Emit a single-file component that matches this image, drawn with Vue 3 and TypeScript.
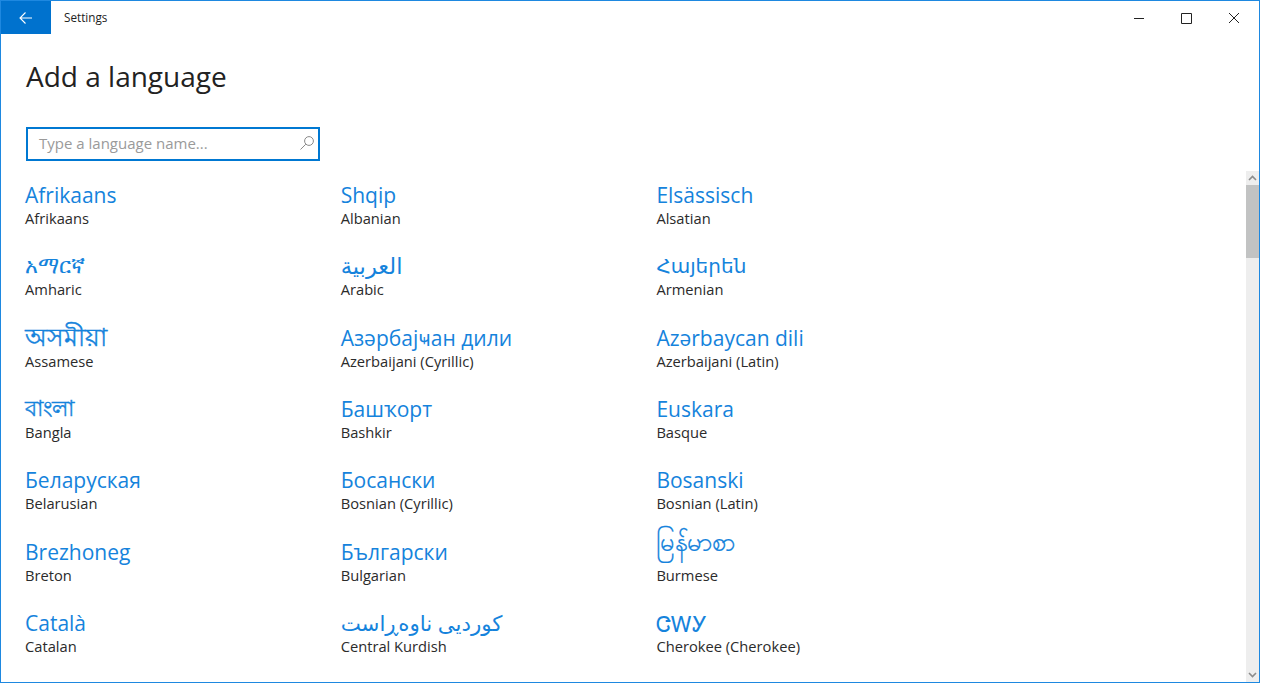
<script setup lang="ts">
interface Lang { name: string; sub: string; cls?: string }
const langs: Lang[] = [
  { name: 'Afrikaans', sub: 'Afrikaans' },
  { name: 'Shqip', sub: 'Albanian' },
  { name: 'Elsässisch', sub: 'Alsatian' },
  { name: 'አማርኛ', sub: 'Amharic', cls: 'ethiopic' },
  { name: 'العربية', sub: 'Arabic', cls: 'arabic' },
  { name: 'Հայերեն', sub: 'Armenian', cls: 'armenian' },
  { name: 'অসমীয়া', sub: 'Assamese', cls: 'assamese' },
  { name: 'Азәрбајҹан дили', sub: 'Azerbaijani (Cyrillic)' },
  { name: 'Azərbaycan dili', sub: 'Azerbaijani (Latin)' },
  { name: 'বাংলা', sub: 'Bangla', cls: 'bangla' },
  { name: 'Башҡорт', sub: 'Bashkir' },
  { name: 'Euskara', sub: 'Basque' },
  { name: 'Беларуская', sub: 'Belarusian' },
  { name: 'Босански', sub: 'Bosnian (Cyrillic)' },
  { name: 'Bosanski', sub: 'Bosnian (Latin)' },
  { name: 'Brezhoneg', sub: 'Breton' },
  { name: 'Български', sub: 'Bulgarian' },
  { name: 'မြန်မာစာ', sub: 'Burmese', cls: 'burmese' },
  { name: 'Català', sub: 'Catalan' },
  { name: 'کوردیی ناوەڕاست', sub: 'Central Kurdish', cls: 'kurdish' },
  { name: 'ᏣᎳᎩ', sub: 'Cherokee (Cherokee)', cls: 'cherokee' },
  { name: '中文(简体)', sub: 'Chinese (Simplified)', cls: 'cjk' },
  { name: '中文(繁體)', sub: 'Chinese (Traditional)', cls: 'cjk' },
  { name: 'Corsu', sub: 'Corsican' },
]
</script>

<template>
  <div class="window">
    <header class="titlebar">
      <button class="back" aria-label="Back">
        <svg width="16" height="16" viewBox="0 0 16 16" fill="none" stroke="#fff" stroke-width="1.1">
          <path d="M14 8H2M7.5 2.5 2 8l5.5 5.5" />
        </svg>
      </button>
      <span class="app-title">Settings</span>
      <div class="controls">
        <svg width="12" height="12" viewBox="0 0 12 12" fill="none" stroke="#222" stroke-width="1"><path d="M1 6.5h10" /></svg>
        <svg width="12" height="12" viewBox="0 0 12 12" fill="none" stroke="#222" stroke-width="1"><path d="M0.5 1.5h10v10h-10z" /></svg>
        <svg width="12" height="12" viewBox="0 0 12 12" fill="none" stroke="#222" stroke-width="1"><path d="M1 1l10 10M11 1 1 11" /></svg>
      </div>
    </header>
    <main class="page">
      <h1 class="heading">Add a language</h1>
      <div class="search">
        <span class="placeholder">Type a language name...</span>
        <svg width="16" height="16" viewBox="0 0 16 16" fill="none" stroke="#8a8a8a" stroke-width="1">
          <circle cx="10" cy="6" r="4.4" />
          <path d="M6.8 9.2 1.5 14.5" />
        </svg>
      </div>
      <div class="body">
        <div class="list">
          <div v-for="l in langs" :key="l.sub" class="item">
            <div class="name" :class="l.cls">{{ l.name }}</div>
            <div class="sub">{{ l.sub }}</div>
          </div>
        </div>
        <div class="scrollbar">
          <svg class="arrow" width="9" height="6" viewBox="0 0 9 6" fill="none" stroke="#8c8c8c" stroke-width="1.6"><path d="M1 5l3.5-3.5L8 5" /></svg>
          <div class="thumb"></div>
          <div class="track"></div>
          <svg class="arrow" width="9" height="6" viewBox="0 0 9 6" fill="none" stroke="#8c8c8c" stroke-width="1.6"><path d="M1 1l3.5 3.5L8 1" /></svg>
        </div>
      </div>
    </main>
  </div>
</template>

<style>
html, body { margin: 0; background: #fff; overflow: hidden; }
</style>

<style scoped>
.window {
  box-sizing: border-box;
  width: 1260px;
  height: 683px;
  border: 1px solid #1e88e0;
  background: #fff;
  display: flex;
  flex-direction: column;
  overflow: hidden;
  font-family: "Open Sans", "Noto Sans", "DejaVu Sans", "Noto Sans CJK SC", sans-serif;
}
.titlebar {
  flex: none;
  height: 33px;
  display: flex;
  align-items: center;
}
.back {
  width: 50px;
  height: 33px;
  border: 0;
  padding: 0;
  background: #0072ce;
  display: flex;
  align-items: center;
  justify-content: center;
}
.app-title {
  margin-left: 13px;
  padding-bottom: 2px;
  font-size: 11.7px;
  color: #222;
}
.controls {
  margin-left: auto;
  width: 107px;
  display: flex;
  justify-content: space-between;
  padding-right: 19px;
}
.page {
  flex: 1;
  min-height: 0;
  display: flex;
  flex-direction: column;
}
.heading {
  margin: 22px 0 0 25px;
  height: 40px;
  font-size: 28px;
  line-height: 40px;
  font-weight: 400;
  color: #222;
}
.search {
  box-sizing: border-box;
  margin: 31px 0 0 25px;
  width: 294px;
  height: 34px;
  border: 2px solid #0078d2;
  display: flex;
  align-items: center;
  justify-content: space-between;
  padding: 0 3px 2px 11px;
}
.placeholder {
  font-size: 15px;
  color: #9a9a9a;
}
.body {
  flex: 1;
  min-height: 0;
  display: flex;
  margin-top: 10px;
}
.list {
  flex: 1;
  min-width: 0;
  overflow: hidden;
  padding: 10px 0 0 24px;
  display: grid;
  grid-template-columns: repeat(3, 315.7px);
  grid-auto-rows: 71.33px;
  align-content: start;
}
.name {
  height: 28px;
  font-size: 21px;
  line-height: 28px;
  color: #1583dc;
  white-space: nowrap;
}
.sub {
  font-size: 14.7px;
  line-height: 19px;
  color: #2b2b2b;
}
.ethiopic { font-size: 22px; line-height: 24px; }
.arabic { font-size: 22.6px; }
.armenian { font-size: 20px; }
.assamese { font-size: 25px; line-height: 24px; -webkit-text-stroke: 0.4px #1583dc; }
.bangla { font-size: 22px; line-height: 25px; -webkit-text-stroke: 0.4px #1583dc; }
.burmese { font-size: 25.4px; line-height: 6px; -webkit-text-stroke: 0.2px #1583dc; }
.kurdish { font-size: 21.3px; }
.cherokee { font-size: 22px; }
.cjk { line-height: 24px; }
.scrollbar {
  flex: none;
  width: 13px;
  background: #eeeeee;
  display: flex;
  flex-direction: column;
  align-items: center;
}
.arrow {
  flex: none;
  margin: 4px 0;
}
.thumb {
  flex: none;
  width: 100%;
  height: 73px;
  background: #c2c3c3;
}
.track { flex: 1; }
</style>
